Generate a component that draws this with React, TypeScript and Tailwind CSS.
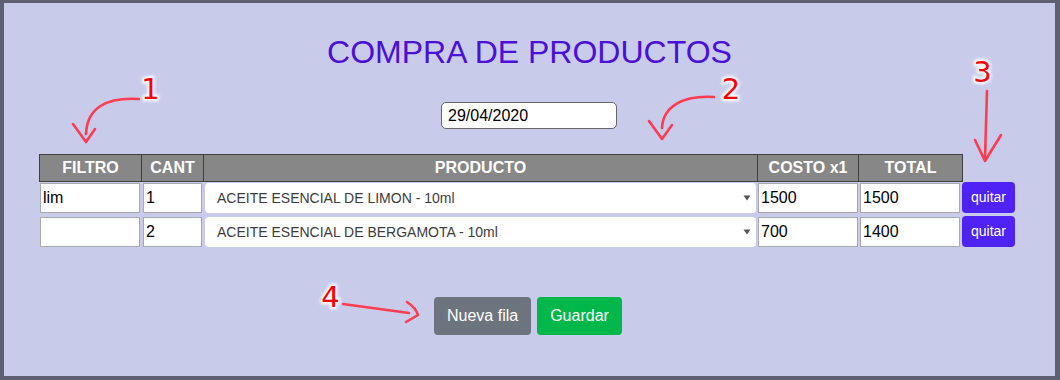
import React from "react";

const font = "font-['Liberation_Sans',Arial,sans-serif]";

function Caret() {
  return (
    <svg width="8" height="6" viewBox="0 0 8 6" className="shrink-0">
      <path d="M0.5 0.5 L7.5 0.5 L4 5.5 Z" fill="#555" />
    </svg>
  );
}

function Row({ filtro, cant, producto, costo, total }: { filtro: string; cant: string; producto: string; costo: string; total: string }) {
  const inp = "h-[30px] mt-[1px] border border-[#a9a9a9] bg-white px-[2px] text-[16px] text-black outline-none " + font;
  return (
    <div className="flex items-start h-[34px] ml-[36px]">
      <input className={inp + " w-[100px]"} defaultValue={filtro} />
      <input className={inp + " w-[59px] ml-[3px]"} defaultValue={cant} />
      <div className="h-[30px] mt-[1px] w-[551px] ml-[3px] bg-white rounded-[4px] flex items-center justify-between pl-[12px] pr-[5px]">
        <span className={"text-[14px] text-[#3c3c3c] " + font}>{producto}</span>
        <Caret />
      </div>
      <input className={inp + " w-[100px] ml-[2px]"} defaultValue={costo} />
      <input className={inp + " w-[100px] ml-[2px]"} defaultValue={total} />
      <button className={"h-[31px] w-[53px] ml-[2px] rounded-[4px] bg-[#4f22f6] text-white text-[14px] " + font}>quitar</button>
    </div>
  );
}

function Annotations() {
  const red = "#ff3b4e";
  const nums: [string, number, number][] = [
    ["1", 150.5, 99],
    ["2", 731, 99],
    ["3", 982.5, 82],
    ["4", 330.5, 307],
  ];
  return (
    <svg className="absolute inset-0 pointer-events-none" width="1060" height="380" viewBox="0 0 1060 380">
      <defs>
        <filter id="glow" x="-50%" y="-50%" width="200%" height="200%">
          <feGaussianBlur stdDeviation="1.6" />
        </filter>
      </defs>
      <g fill="none" stroke={red} strokeWidth="2.6" strokeLinecap="round" strokeLinejoin="round">
        <path d="M139 99 C 106 97, 87 108, 86 134" />
        <path d="M73 124 L86 142 L95 129" />
        <path d="M714 97 C 682 95, 663 107, 662 128" />
        <path d="M649 121 L662 139 L672 125" />
        <path d="M987 91 L985 158" />
        <path d="M975 140 L985 161 L1001 135" />
        <path d="M343 304 L409 313" />
        <path d="M407 302 Q416 308 418 315 L406 322" />
      </g>
      {nums.map(([t, x, y]) => (
        <g key={t} fontFamily="'DejaVu Sans', sans-serif" fontSize="29" textAnchor="middle">
          <text x={x} y={y} fill="#fff" stroke="#fff" strokeWidth="4" filter="url(#glow)">{t}</text>
          <text x={x} y={y} fill="#ff0000">{t}</text>
        </g>
      ))}
    </svg>
  );
}

export default function App() {
  const th = "h-[28px] border-l border-y border-[#3f3f3f] bg-[#878787] flex items-center justify-center text-white font-bold text-[16px] " + font;
  return (
    <div className="relative w-[1060px] h-[380px] bg-[#5e6072] pt-[3px] pl-[4px] pr-[5px] pb-[4px]">
      <div className="h-full bg-[#c8cbea] flex flex-col">
        <h1 className={"mt-[30px] text-center text-[32px] leading-[38px] text-[#4a10d6] " + font}>COMPRA DE PRODUCTOS</h1>
        <div className="mt-[31px] ml-[437px] flex">
          <input
            className={"w-[176px] h-[27px] border border-[#666] rounded-[5px] bg-white px-[6px] text-[16px] text-black outline-none " + font}
            defaultValue="29/04/2020"
          />
        </div>
        <div className="mt-[25px] ml-[35px] flex">
          <div className={th + " w-[102px]"}>FILTRO</div>
          <div className={th + " w-[62px]"}>CANT</div>
          <div className={th + " w-[554px]"}>PRODUCTO</div>
          <div className={th + " w-[101px]"}>COSTO x1</div>
          <div className={th + " w-[105px] border-r"}>TOTAL</div>
        </div>
        <Row filtro="lim" cant="1" producto="ACEITE ESENCIAL DE LIMON - 10ml" costo="1500" total="1500" />
        <Row filtro="" cant="2" producto="ACEITE ESENCIAL DE BERGAMOTA - 10ml" costo="700" total="1400" />
        <div className="mt-[47px] ml-[430px] flex gap-[6px]">
          <button className={"h-[38px] px-[13px] rounded-[4px] bg-[#6c757d] text-white text-[16px] " + font}>Nueva fila</button>
          <button className={"h-[38px] px-[13px] rounded-[4px] bg-[#00b74a] text-white text-[16px] " + font}>Guardar</button>
        </div>
      </div>
      <Annotations />
    </div>
  );
}
